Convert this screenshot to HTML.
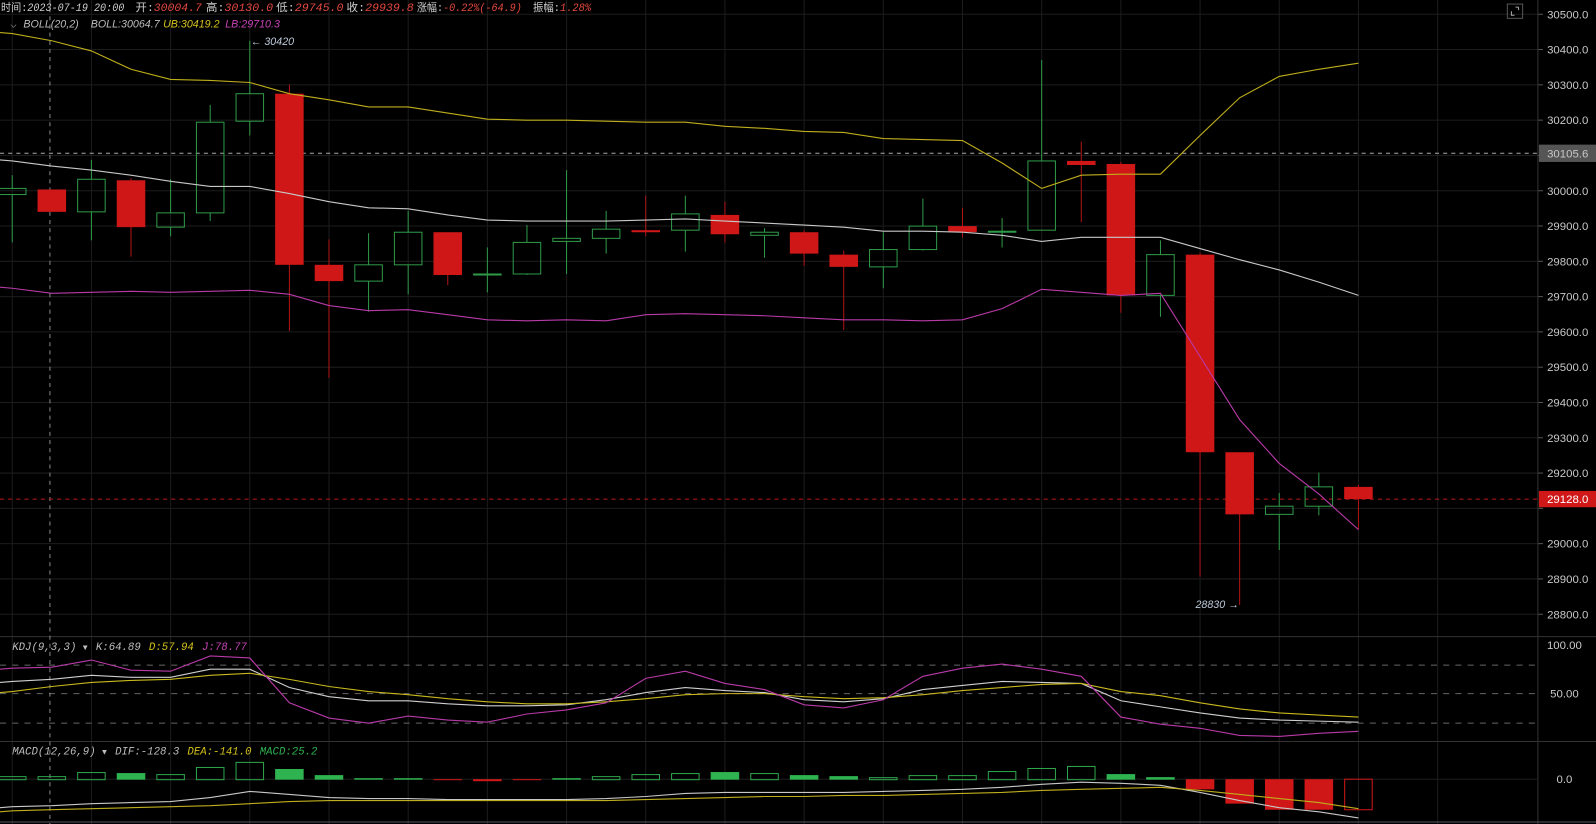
<!DOCTYPE html>
<html><head><meta charset="utf-8"><style>
html,body{margin:0;padding:0;background:#000;overflow:hidden}
svg{display:block}
text{font-family:"Liberation Mono","Noto Sans CJK SC",monospace;font-size:10.5px}
.sn{font-family:"Liberation Sans",sans-serif;font-size:10.5px}
.ax{font-family:"Liberation Sans",sans-serif;font-size:11.2px;fill:#c9c9c9}
.it{font-style:italic}
</style></head><body>
<svg id="s" width="1596" height="824" viewBox="0 0 1566 809" preserveAspectRatio="none">
<g id="grid"></g>
<g id="main"></g>
<text x="1" y="11" fill="#cfcfcf" textLength="121" lengthAdjust="spacingAndGlyphs">时间:<tspan class="it">2023-07-19 20:00</tspan></text>
<text x="133" y="11" fill="#cfcfcf" textLength="65" lengthAdjust="spacingAndGlyphs">开:<tspan class="it" fill="#e5483f">30004.7</tspan></text>
<text x="202" y="11" fill="#cfcfcf" textLength="66" lengthAdjust="spacingAndGlyphs">高:<tspan class="it" fill="#e5483f">30130.0</tspan></text>
<text x="271" y="11" fill="#cfcfcf" textLength="66" lengthAdjust="spacingAndGlyphs">低:<tspan class="it" fill="#e5483f">29745.0</tspan></text>
<text x="340" y="11" fill="#cfcfcf" textLength="66" lengthAdjust="spacingAndGlyphs">收:<tspan class="it" fill="#e5483f">29939.8</tspan></text>
<text x="409" y="11" fill="#cfcfcf" textLength="103" lengthAdjust="spacingAndGlyphs">涨幅:<tspan class="it" fill="#e5483f">-0.22%(-64.9)</tspan></text>
<text x="523" y="11" fill="#cfcfcf" textLength="57" lengthAdjust="spacingAndGlyphs">振幅:<tspan class="it" fill="#e5483f">1.28%</tspan></text>
<text x="10" y="27" fill="#9a9a9a">⌵</text>
<text x="23" y="27" class="it sn" fill="#bdbdbd">BOLL(20,2)</text>
<text x="89" y="27" class="it sn" fill="#bdbdbd">BOLL:30064.7</text>
<text x="160" y="27" class="it sn" fill="#d4c21e">UB:30419.2</text>
<text x="221" y="27" class="it sn" fill="#c743b8">LB:29710.3</text>
<text x="246" y="44" class="it sn" fill="#bcc8d8">← 30420</text>
<text x="1173" y="597" class="it sn" fill="#bcc8d8">28830 →</text>
<text x="12" y="638" class="it" fill="#bdbdbd">KDJ(9,3,3) <tspan fill="#bdbdbd" font-size="8">▼</tspan><tspan dx="8">K:64.89</tspan><tspan dx="8" fill="#d4c21e">D:57.94</tspan><tspan dx="8" fill="#c743b8">J:78.77</tspan></text>
<text x="12" y="741" class="it" fill="#bdbdbd">MACD(12,26,9) <tspan font-size="8">▼</tspan><tspan dx="8">DIF:-128.3</tspan><tspan dx="8" fill="#d4c21e">DEA:-141.0</tspan><tspan dx="8" fill="#2fb351">MACD:25.2</tspan></text>
<rect x="1479" y="4" width="15" height="14" fill="none" stroke="#555" stroke-width="1"/>
<path d="M1483 11v4h3M1490 7h-3M1490 7v3" stroke="#aaa" fill="none" stroke-width="1"/>
<g id="axis"></g>
</svg>
<script>
var NS="http://www.w3.org/2000/svg";
function el(p,t,a){var e=document.createElementNS(NS,t);for(var k in a)e.setAttribute(k,a[k]);p.appendChild(e);return e;}
var G=document.getElementById('grid'),M=document.getElementById('main'),A=document.getElementById('axis');
function py(p){return 14+(30500-p)*0.3465;}
var X=[];for(var i=0;i<35;i++)X.push(12+i*38.85);
for(var p=30500;p>=28800;p-=100){el(G,'line',{x1:0,x2:1509,y1:py(p),y2:py(p),stroke:'#1c1c1c'});el(G,'line',{x1:1509,x2:1514,y1:py(p),y2:py(p),stroke:'#555'});
 if(p!=29100)el(A,'text',{x:1518,y:py(p)+4,class:'ax'}).textContent=p+'.0';}
for(var i=0;i<=36;i+=2){var x=12+i*38.85;el(G,'line',{x1:x,x2:x,y1:0,y2:809,stroke:'#1c1c1c'});}
el(G,'line',{x1:1509,x2:1509,y1:0,y2:809,stroke:'#333'});
el(G,'line',{x1:0,x2:1566,y1:625,y2:625,stroke:'#333'});
el(G,'line',{x1:0,x2:1566,y1:728,y2:728,stroke:'#333'});
el(G,'line',{x1:0,x2:1566,y1:807,y2:807,stroke:'#556'});
[[653,1],[681,0],[710,1]].forEach(function(d){el(G,'line',{x1:0,x2:1509,y1:d[0],y2:d[0],stroke:'#666','stroke-dasharray':'6 6'});});
el(G,'line',{x1:0,x2:1509,y1:765,y2:765,stroke:'#1c1c1c'});
el(G,'line',{x1:49,x2:49,y1:0,y2:809,stroke:'#888','stroke-dasharray':'4 4'});
el(G,'line',{x1:0,x2:1509,y1:150.5,y2:150.5,stroke:'#aaa','stroke-dasharray':'4 4'});
el(G,'line',{x1:0,x2:1509,y1:490,y2:490,stroke:'#c01818','stroke-dasharray':'4 4'});
[['100.00',637],['50.00',685],['0.0',769]].forEach(function(d){el(A,'text',{x:1535,y:d[1],class:'ax','text-anchor':'middle'}).textContent=d[0];});
el(A,'rect',{x:1510,y:142,width:56,height:17,fill:'#555'});
el(A,'text',{x:1518,y:154.5,class:'ax',fill:'#fff'}).textContent='30105.6';
el(A,'rect',{x:1510,y:482,width:56,height:16,fill:'#d01818'});
el(A,'text',{x:1518,y:494,class:'ax',style:'fill:#fff'}).textContent='29128.0';
var C=[[185,191,172,238,'g'],[186,208,186,208,'r'],[176,208,157,236,'g'],[177,223,175,252,'r'],[209,223,176,232,'g'],[120,209,103,217,'g'],[92,119,40,133,'g'],[92,260,83,325,'r'],[260,276,235,371,'r'],[260,276,229,306,'g'],[228,260,207,289,'g'],[228,270,228,280,'r'],[269,270,243,287,'g'],[238,269,221,270,'g'],[234,237,167,269,'g'],[225,234,207,249,'g'],[226,228,192,232,'r'],[210,226,192,247,'g'],[211,230,198,238,'r'],[228,231,224,253,'g'],[228,249,226,261,'r'],[250,262,246,324,'r'],[245,262,228,283,'g'],[222,245,195,246,'g'],[222,228,204,233,'r'],[227,228,214,243,'g'],[158,226,59,226,'g'],[158,162,139,218,'r'],[161,290,159,307,'r'],[250,290,236,311,'g'],[250,444,248,566,'r'],[444,505,444,594,'r'],[497,505,484,540,'g'],[478,497,464,506,'g'],[478,490,476,520,'r']];
C.forEach(function(c,i){var x=X[i];var col=c[4]=='r'?'#d01717':'#2e9a48';
 if(c[4]=='r'){el(M,'line',{x1:x,x2:x,y1:c[2],y2:c[3],stroke:'#b01515'});el(M,'rect',{x:x-14,y:c[0],width:28,height:Math.max(c[1]-c[0],2),fill:col});}
 else{el(M,'line',{x1:x,x2:x,y1:c[2],y2:c[0],stroke:col});el(M,'line',{x1:x,x2:x,y1:c[1],y2:c[3],stroke:col});el(M,'rect',{x:x-13.5,y:c[0],width:27,height:Math.max(c[1]-c[0],1),fill:'none',stroke:col});}
});
function line(ys,col,x0){var pts=ys.map(function(y,i){return X[i]+','+y;});if(x0!==undefined)pts.unshift('0,'+x0);el(M,'polyline',{points:pts.join(' '),fill:'none',stroke:col,'stroke-width':1.1});}
line([33,40,50,68,78,79,81,92,98,105,105,111,117,118,118,119,120,120,124,126,129,130,136,137,138,160,185,172,171,171,133,96,75,68,62],'#bfae1c',32);
line([158,163,167,172,178,183,183,190,198,204,205,211,216,217,217,217,216,215,217,219,221,223,227,227,228,231,237,233,233,233,244,255,265,277,290],'#c8c8c8',157);
line([283,288,287,286,287,286,285,289,300,305,304,309,314,315,314,315,309,308,309,310,312,314,314,315,314,303,284,287,290,288,350,412,455,485,520],'#b83aa8',282);
line([669,667,663,665,665,657,657,675,684,688,688,691,693,693,692,687,680,675,678,680,687,689,686,677,673,669,670,671,688,694,700,705,707,708,709],'#cfcfcf',670);
line([679,674,670,668,667,663,661,667,674,679,682,686,689,691,691,689,686,682,681,681,684,686,685,682,678,675,672,671,679,683,690,696,700,702,704],'#c8b81e',680);
line([656,655,648,658,659,644,646,690,705,710,703,707,709,701,697,690,666,659,671,677,692,695,687,664,656,652,657,664,704,711,715,722,723,720,718],'#b83aa8',657);
var B=[[3,'h'],[3,'h'],[7,'h'],[6,'f'],[5,'h'],[12,'h'],[17,'h'],[10,'f'],[4,'f'],[1,'f'],[1,'f'],[-1,'r'],[-2,'r'],[-1,'r'],[1,'f'],[3,'h'],[5,'h'],[6,'h'],[7,'f'],[6,'h'],[4,'f'],[3,'f'],[2,'h'],[4,'h'],[4,'h'],[8,'h'],[11,'h'],[13,'h'],[5,'f'],[2,'f'],[-10,'r'],[-24,'r'],[-30,'r'],[-30,'r'],[-30,'rh']];
B.forEach(function(b,i){var x=X[i]-14,h=b[0],y=h>0?765-h:765,hh=Math.abs(h);
 if(b[1]=='h')el(M,'rect',{x:x+0.5,y:y+0.5,width:27,height:hh,fill:'none',stroke:'#2fa54c'});
 else if(b[1]=='f')el(M,'rect',{x:x,y:y,width:28,height:hh+0.5,fill:'#2fb351'});
 else if(b[1]=='r')el(M,'rect',{x:x,y:y,width:28,height:hh,fill:'#d01717'});
 else el(M,'rect',{x:x+0.5,y:y,width:27,height:hh,fill:'none',stroke:'#d01717'});
});
line([792,791,789,788,787,783,777,780,783,784,784,785,785,785,785,784,782,779,778,778,778,778,777,776,775,773,770,768,769,771,778,786,793,797,803],'#c8c8c8',793);
line([796,795,794,793,792,791,789,787,786,786,786,786,786,786,786,786,785,784,783,782,782,781,781,780,779,778,776,775,774,773,776,780,784,788,794],'#bfae1c',797);
</script>
</body></html>
